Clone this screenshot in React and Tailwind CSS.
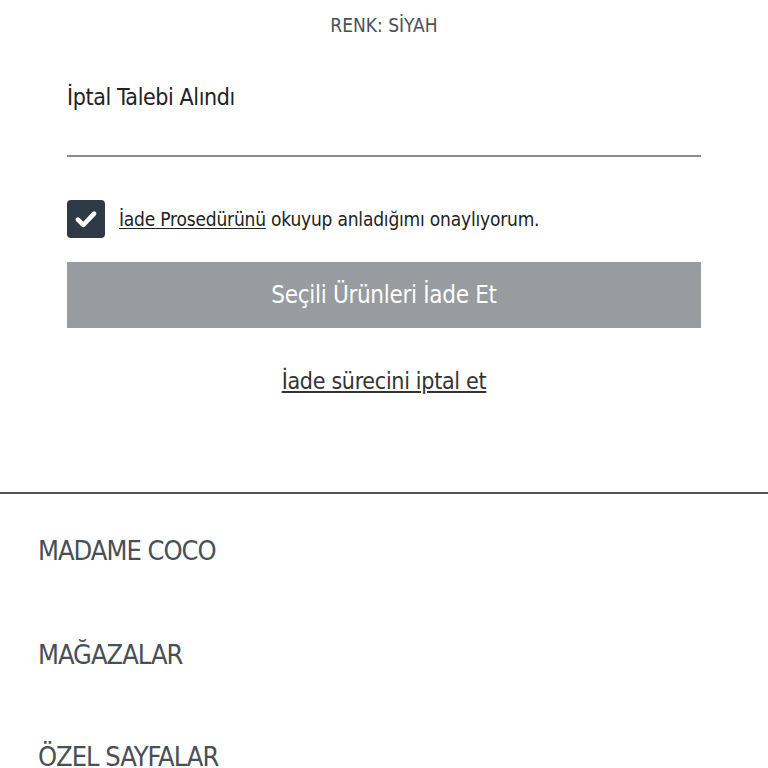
export default function App() {
  const font = { fontFamily: '"Liberation Sans Narrow", "DejaVu Sans Condensed", "Roboto", sans-serif' };
  return (
    <div className="w-[768px] h-[768px] overflow-hidden bg-white" style={font}>
      <div className="px-[67px]">
        <div className="pt-[12px] text-center text-[19px] leading-[26px] text-[#4b5057]">RENK: SİYAH</div>
        <div className="mt-[44px] text-[23px] leading-[30px] text-[#222] tracking-[-0.4px]">İptal Talebi Alındı</div>
        <div className="mt-[43px] h-[2px] bg-[#8a8a8a]"></div>
        <label className="mt-[43px] flex items-center gap-[14px]">
          <span className="w-[38px] h-[38px] rounded-[4px] bg-[#2e3a46] flex items-center justify-center">
            <svg width="26" height="26" viewBox="0 0 24 24" fill="none" stroke="white" strokeWidth="4.2" strokeLinecap="round" strokeLinejoin="round">
              <path d="M4.5 12.5l5 5L19.5 7" />
            </svg>
          </span>
          <span className="text-[19px] leading-[26px] text-[#222] tracking-[-0.2px]">
            <span className="underline underline-offset-2">İade Prosedürünü</span> okuyup anladığımı onaylıyorum.
          </span>
        </label>
        <button className="mt-[24px] w-full h-[66px] bg-[#989ca1] text-white text-[24px] tracking-[-0.3px] flex items-center justify-center">
          Seçili Ürünleri İade Et
        </button>
        <div className="mt-[38px] text-center">
          <a className="text-[23px] leading-[30px] text-[#333] tracking-[-0.3px] underline underline-offset-2">İade sürecini iptal et</a>
        </div>
      </div>
      <div className="mt-[96px] h-[2px] bg-[#555]"></div>
      <div className="px-[38px]">
        <div className="h-[104px] pt-[40px] text-[27px] leading-[34px] text-[#4a4f55] tracking-[-1px]">MADAME COCO</div>
        <div className="h-[104px] pt-[40px] text-[27px] leading-[34px] text-[#4a4f55] tracking-[-1px]">MAĞAZALAR</div>
        <div className="h-[104px] pt-[38px] text-[27px] leading-[34px] text-[#4a4f55] tracking-[-1px]">ÖZEL SAYFALAR</div>
      </div>
    </div>
  );
}
